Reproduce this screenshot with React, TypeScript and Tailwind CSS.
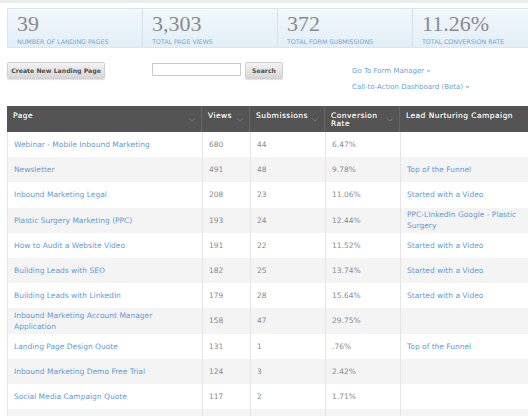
import React from "react";

type Row = {
  page: React.ReactNode;
  views: string;
  subs: string;
  rate: string;
  campaign?: React.ReactNode;
};

const rows: Row[] = [
  { page: "Webinar - Mobile Inbound Marketing", views: "680", subs: "44", rate: "6.47%" },
  { page: "Newsletter", views: "491", subs: "48", rate: "9.78%", campaign: "Top of the Funnel" },
  { page: "Inbound Marketing Legal", views: "208", subs: "23", rate: "11.06%", campaign: "Started with a Video" },
  {
    page: "Plastic Surgery Marketing (PPC)",
    views: "193",
    subs: "24",
    rate: "12.44%",
    campaign: (
      <>
        PPC-LInkedIn Google - Plastic
        <br />
        Surgery
      </>
    ),
  },
  { page: "How to Audit a Website Video", views: "191", subs: "22", rate: "11.52%", campaign: "Started with a Video" },
  { page: "Building Leads with SEO", views: "182", subs: "25", rate: "13.74%", campaign: "Started with a Video" },
  { page: "Building Leads with LinkedIn", views: "179", subs: "28", rate: "15.64%", campaign: "Started with a Video" },
  {
    page: (
      <>
        Inbound Marketing Account Manager
        <br />
        Application
      </>
    ),
    views: "158",
    subs: "47",
    rate: "29.75%",
  },
  { page: "Landing Page Design Quote", views: "131", subs: "1", rate: ".76%", campaign: "Top of the Funnel" },
  { page: "Inbound Marketing Demo Free Trial", views: "124", subs: "3", rate: "2.42%" },
  { page: "Social Media Campaign Quote", views: "117", subs: "2", rate: "1.71%" },
  { page: "", views: "", subs: "", rate: "" },
];

const stats = [
  { value: "39", label: "Number of Landing Pages" },
  { value: "3,303", label: "Total Page Views" },
  { value: "372", label: "Total Form Submissions" },
  { value: "11.26%", label: "Total Conversion Rate" },
];

const cols = "grid grid-cols-[195px_48px_75px_75px_180px]";

function SortArrow() {
  return (
    <svg width="6" height="4" viewBox="0 0 6 4" className="absolute right-[6px] top-[12px]">
      <path d="M0.5 0.5 L3 3 L5.5 0.5" fill="none" stroke="#7a7a7a" strokeWidth="0.9" />
    </svg>
  );
}

function HeadCell({ children, arrow = true, last = false }: { children: React.ReactNode; arrow?: boolean; last?: boolean }) {
  return (
    <div
      className={`relative px-[6px] pt-[6px] text-[7.5px] leading-[8px] tracking-[0.45px] text-[#ececec] ${
        last ? "" : "border-r border-[#666666]"
      }`}
      style={{ textShadow: "0 0 0.3px #ececec" }}
    >
      {children}
      {arrow && <SortArrow />}
    </div>
  );
}

const btn =
  "h-[17px] rounded-[2px] border border-[#cfcfcf] bg-gradient-to-b from-[#f3f3f3] to-[#d6d6d6] text-[6.2px] font-bold text-[#4e4e4e] shadow-[0_1px_1px_rgba(0,0,0,0.12)]";

export default function App() {
  return (
    <div
      className="h-[416px] w-[528px] overflow-hidden bg-white"
      style={{ fontFamily: '"DejaVu Sans", Verdana, sans-serif' }}
    >
      <div className="h-[3px] bg-[#ededed]" />

      {/* stats strip */}
      <div className="ml-[7px] mt-[5px] flex h-[40px] w-[540px] border border-[#d9e6ef] bg-gradient-to-b from-[#f2f8fc] to-[#e2eef7]">
        {stats.map((s, i) => (
          <div
            key={s.label}
            className={`w-[135px] shrink-0 pl-[9px] pt-[3px] ${i < 3 ? "border-r border-[#d3e2ec]" : ""}`}
          >
            <div
              className="text-[22px] leading-[24px] text-[#8a8a8a]"
              style={{ fontFamily: '"Liberation Serif", Georgia, serif' }}
            >
              {s.value}
            </div>
            <div className="mt-[2px] text-[6.3px] uppercase leading-[8px] text-[#6ea8da]">{s.label}</div>
          </div>
        ))}
      </div>

      {/* actions */}
      <div className="mt-[14px] flex h-[44px] items-start">
        <button className={`${btn} ml-[7px] w-[98px]`}>Create New Landing Page</button>
        <input className="ml-[47px] mt-[1px] h-[13px] w-[89px] border border-[#c9c9c9] bg-white" />
        <button className={`${btn} ml-[4px] w-[38px]`}>Search</button>
        <div className="ml-[69px] mt-[4px] flex flex-col gap-[6px] text-[7px] leading-[10px] text-[#6a9fd6]">
          <span>Go To Form Manager »</span>
          <span>Call-to-Action Dashboard (Beta) »</span>
        </div>
      </div>

      {/* table */}
      <div className="ml-[7px] w-[573px]">
        <div className={`${cols} h-[26px] bg-[#545454]`}>
          <HeadCell>Page</HeadCell>
          <HeadCell>Views</HeadCell>
          <HeadCell>Submissions</HeadCell>
          <HeadCell>
            Conversion
            <br />
            Rate
          </HeadCell>
          <HeadCell arrow={false} last>
            Lead Nurturing Campaign
          </HeadCell>
        </div>
        {rows.map((r, i) => (
          <div
            key={i}
            className={`${cols} h-[25.2px] border-l border-[#e4e4e4] text-[7.5px] leading-[11px] ${
              i % 2 === 1 ? "bg-[#f4f4f4]" : "bg-white"
            }`}
          >
            <div className="flex items-center border-r border-[#e4e4e4] px-[6px] text-[#5f9ad6]">{r.page}</div>
            <div className="flex items-center border-r border-[#e4e4e4] px-[6px] text-[#8a8a8a]">{r.views}</div>
            <div className="flex items-center border-r border-[#e4e4e4] px-[6px] text-[#8a8a8a]">{r.subs}</div>
            <div className="flex items-center border-r border-[#e4e4e4] px-[6px] text-[#8a8a8a]">{r.rate}</div>
            <div className="flex items-center px-[6px] text-[#5f9ad6]">{r.campaign}</div>
          </div>
        ))}
      </div>
    </div>
  );
}
